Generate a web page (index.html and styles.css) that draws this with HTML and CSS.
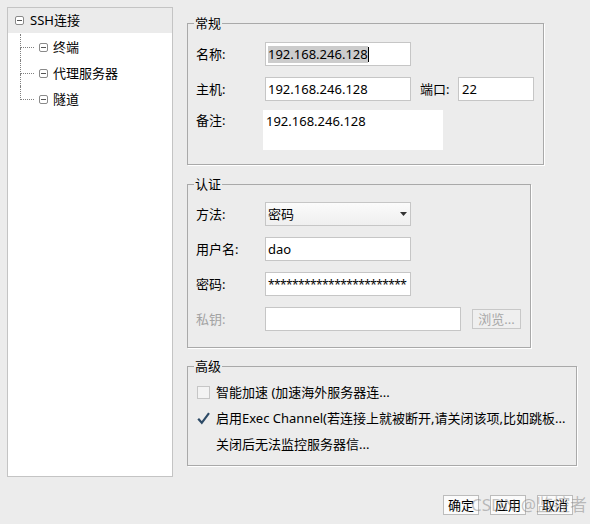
FILE: index.html
```html
<!DOCTYPE html>
<html lang="zh-CN">
<head>
<meta charset="utf-8">
<title>SSH连接</title>
<link rel="stylesheet" href="styles.css">
</head>
<body>
<div class="window">
  <div class="tree">
    <div class="tree-root">
      <svg class="exp" viewBox="0 0 9 9" width="9" height="9"><rect x="0.5" y="0.5" width="8" height="8" rx="1.5" fill="#fff" stroke="#8a8a8a"/><line x1="2" y1="4.5" x2="7" y2="4.5" stroke="#555"/></svg>
      <span>SSH连接</span>
    </div>
    <div class="tree-children">
      <div class="tree-item">
        <span class="conn"><span class="conn-top"></span><span class="conn-bot"></span></span>
        <svg class="exp" viewBox="0 0 9 9" width="9" height="9"><rect x="0.5" y="0.5" width="8" height="8" rx="1.5" fill="#fff" stroke="#8a8a8a"/><line x1="2" y1="4.5" x2="7" y2="4.5" stroke="#555"/></svg>
        <span>终端</span>
      </div>
      <div class="tree-item">
        <span class="conn"><span class="conn-top"></span><span class="conn-bot"></span></span>
        <svg class="exp" viewBox="0 0 9 9" width="9" height="9"><rect x="0.5" y="0.5" width="8" height="8" rx="1.5" fill="#fff" stroke="#8a8a8a"/><line x1="2" y1="4.5" x2="7" y2="4.5" stroke="#555"/></svg>
        <span>代理服务器</span>
      </div>
      <div class="tree-item last">
        <span class="conn"><span class="conn-top"></span><span class="conn-bot"></span></span>
        <svg class="exp" viewBox="0 0 9 9" width="9" height="9"><rect x="0.5" y="0.5" width="8" height="8" rx="1.5" fill="#fff" stroke="#8a8a8a"/><line x1="2" y1="4.5" x2="7" y2="4.5" stroke="#555"/></svg>
        <span>隧道</span>
      </div>
    </div>
  </div>

  <div class="main">
    <fieldset class="group g-general">
      <legend>常规</legend>
      <div class="row r-first"><span class="lbl">名称:</span><div class="field w146"><span class="sel">192.168.246.128</span><span class="caret"></span></div></div>
      <div class="row"><span class="lbl">主机:</span><div class="field w146">192.168.246.128</div><span class="lbl lbl-port">端口:</span><div class="field w76">22</div></div>
      <div class="row row-note"><span class="lbl lbl-top">备注:</span><div class="note">192.168.246.128</div></div>
    </fieldset>

    <fieldset class="group g-auth">
      <legend>认证</legend>
      <div class="row r-first"><span class="lbl">方法:</span><div class="field select w146"><span>密码</span><svg class="arrow" viewBox="0 0 7 4" width="7" height="4"><polygon points="0,0 7,0 3.5,4" fill="#333"/></svg></div></div>
      <div class="row"><span class="lbl">用户名:</span><div class="field w146">dao</div></div>
      <div class="row"><span class="lbl">密码:</span><div class="field w146 pwd">***********************</div></div>
      <div class="row"><span class="lbl disabled">私钥:</span><div class="field w196"></div><span class="btn btn-disabled">浏览...</span></div>
    </fieldset>

    <fieldset class="group g-adv">
      <legend>高级</legend>
      <div class="chk-row r-first"><span class="chk"></span><span>智能加速 (加速海外服务器连...</span></div>
      <div class="chk-row"><svg class="check" viewBox="0 0 13 13" width="13" height="13"><polyline points="1.2,6.8 4.8,10.8 12,1.2" fill="none" stroke="#2d4a66" stroke-width="2.2"/></svg><span>启用Exec Channel(若连接上就被断开,请关闭该项,比如跳板...</span></div>
      <div class="chk-row indent"><span>关闭后无法监控服务器信...</span></div>
    </fieldset>

    <div class="buttons">
      <span class="btn">确定</span>
      <span class="btn">应用</span>
      <span class="btn">取消</span>
    </div>
  </div>
  <div class="watermark">CSDN @监控者</div>
</div>
</body>
</html>
```

FILE: styles.css
```css
* { box-sizing: border-box; }
html, body { margin: 0; padding: 0; }
body {
  background: #ececec;
  width: 590px;
  height: 524px;
  overflow: hidden;
  font-family: "Noto Sans", "Noto Sans CJK SC", sans-serif;
  font-size: 13px;
  line-height: 17px;
  color: #000;
}
.window {
  position: relative;
  display: flex;
  align-items: flex-start;
  padding: 7px 0 0 7px;
  height: 524px;
}

/* tree */
.tree {
  width: 166px;
  height: 470px;
  background: #fff;
  border: 1px solid #c4c4c4;
}
.tree-root {
  display: flex;
  align-items: center;
  height: 25px;
  background: #ebebeb;
  padding-left: 7px;
}
.tree-root .exp { margin-right: 6px; }
.tree-children { padding-top: 1px; }
.tree-item {
  display: flex;
  align-items: center;
  height: 26px;
}
.conn {
  display: flex;
  flex-direction: column;
  width: 14px;
  height: 26px;
  margin-left: 12px;
  margin-right: 5px;
}
.conn-top {
  height: 14px;
  border-left: 1px dotted #808080;
  border-bottom: 1px dotted #808080;
}
.conn-bot {
  flex: 1;
  border-left: 1px dotted #808080;
}
.tree-item.last .conn-bot { border-left: none; }
.tree-item .exp { margin-right: 5px; }
.exp { flex: none; display: block; }

/* main */
.main {
  margin-left: 14px;
  margin-top: 8px;
  display: flex;
  flex-direction: column;
}
.group {
  margin: 0;
  padding: 0 0 0 8px;
  border: 1px solid #a9a9a9;
  box-shadow: 1px 1px 0 #fff;
  min-width: 0;
}
.group legend {
  padding: 0 1px;
  margin-left: -2px;
  line-height: 17px;
}
.g-general { width: 357px; padding-bottom: 14px; }
.g-auth { width: 344px; margin-top: 11px; padding-bottom: 16px; }
.g-adv { width: 390px; margin-top: 10px; padding-bottom: 8px; padding-left: 9px; }
.g-adv legend { margin-left: -3px; }

.row {
  display: flex;
  align-items: center;
  margin-top: 11px;
}
.g-general .r-first { margin-top: 10px; }
.g-auth .r-first { margin-top: 9px; }
.row-note { margin-top: 9px; align-items: flex-start; }
.lbl { width: 69px; flex: none; }
.lbl-top { padding-top: 2px; }
.lbl-port { width: 38px; margin-left: 9px; }
.disabled { color: #a3a3a3; }

.field {
  height: 24px;
  background: #fff;
  border: 1px solid #c6c6c6;
  padding-left: 2px;
  display: flex;
  align-items: center;
  white-space: nowrap;
  overflow: hidden;
}
.w146 { width: 146px; }
.w76 { width: 76px; padding-left: 3px; }
.w196 { width: 196px; }
.sel { background: #cccccc; }
.caret {
  display: inline-block;
  width: 1px;
  height: 15px;
  background: #000;
}
.select {
  background: linear-gradient(#fbfbfb, #efefef);
  padding-right: 3px;
}
.select .arrow { margin-left: auto; }
.pwd { letter-spacing: -0.6px; font-size: 12px; }
.note {
  width: 180px;
  height: 40px;
  background: #fff;
  margin-left: -2px;
  padding: 3px 0 0 3px;
}

.btn {
  display: inline-flex;
  align-items: center;
  justify-content: center;
  height: 20px;
  width: 36px;
  border: 1px solid #bcbcbc;
  background: #fbfbfb;
  white-space: nowrap;
}
.btn-disabled {
  width: 49px;
  margin-left: 11px;
  background: #efefef;
  color: #a8a8a8;
  border-color: #c8c8c8;
}

.chk-row {
  display: flex;
  align-items: center;
  height: 26px;
}
.g-adv .r-first { margin-top: 4px; }
.chk {
  width: 13px;
  height: 13px;
  border: 1px solid #c6c6c6;
  background: #f3f3f3;
  margin-right: 6px;
  flex: none;
}
.check { margin-right: 6px; flex: none; display: block; }
.indent { padding-left: 19px; }

.buttons {
  display: flex;
  justify-content: flex-end;
  gap: 11px;
  margin-top: 29px;
  padding-right: 4px;
}

.watermark {
  position: absolute;
  left: 471px;
  top: 494px;
  font-size: 17px;
  line-height: 22px;
  color: rgba(120, 120, 120, 0.45);
  pointer-events: none;
  white-space: nowrap;
}
```
